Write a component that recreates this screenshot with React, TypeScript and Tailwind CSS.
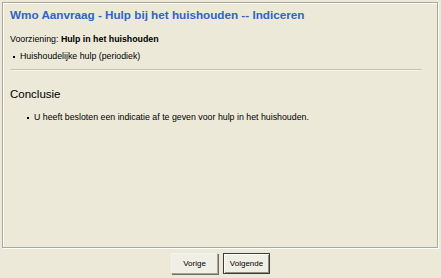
import React from "react";

const Bullet: React.FC<{ children: React.ReactNode; className?: string }> = ({ children, className }) => (
  <div className={"flex items-center " + (className ?? "")}>
    <span className="w-[2px] h-[2px] bg-black mr-[5px] shrink-0" />
    <span>{children}</span>
  </div>
);

const App: React.FC = () => {
  return (
    <div
      className="w-[441px] h-[278px] bg-[#ECE9D8] flex flex-col text-black"
      style={{ fontFamily: '"Liberation Sans", Arial, sans-serif' }}
    >
      {/* main panel */}
      <div className="mt-[2px] ml-[2px] w-[436px] h-[246px] border border-[#ACA899] shadow-[1px_1px_0_#fff,inset_1px_1px_0_#fff] pl-[7px] pr-[15px]">
        <h1 className="text-[11.7px] font-bold text-[#2E64C8] mt-[4px] leading-[15px]">
          Wmo Aanvraag - Hulp bij het huishouden -- Indiceren
        </h1>

        <div className="text-[8.8px] mt-[12px] leading-[11px]">
          Voorziening: <span className="font-bold">Hulp in het huishouden</span>
        </div>

        <Bullet className="text-[8.8px] mt-[6px] leading-[11px] pl-[3px]">Huishoudelijke hulp (periodiek)</Bullet>

        <div className="mt-[7px] h-[2px] border-t border-[#C5C2B2] border-b border-b-[#F5F4EE]" />

        <div className="text-[11.5px] mt-[16px] leading-[15px]">Conclusie</div>

        <Bullet className="text-[8.8px] mt-[10px] leading-[11px] pl-[17px]">
          U heeft besloten een indicatie af te geven voor hulp in het huishouden.
        </Bullet>
      </div>

      {/* buttons */}
      <div className="flex justify-center gap-[5px] mt-[5px]">
        <button className="w-[47px] h-[21px] text-[8px] bg-[#F0EFE6] border border-[#F5F4F0] border-r-[#A9A799] border-b-[#A9A799] shadow-[1px_1px_0_#6E6D64]">
          Vorige
        </button>
        <button className="w-[47px] h-[21px] text-[8px] bg-[#F0EFE6] border border-[#3C3B36] shadow-[inset_1px_1px_0_#fff,inset_-1px_-1px_0_#8E8D84]">
          Volgende
        </button>
      </div>
    </div>
  );
};

export default App;
